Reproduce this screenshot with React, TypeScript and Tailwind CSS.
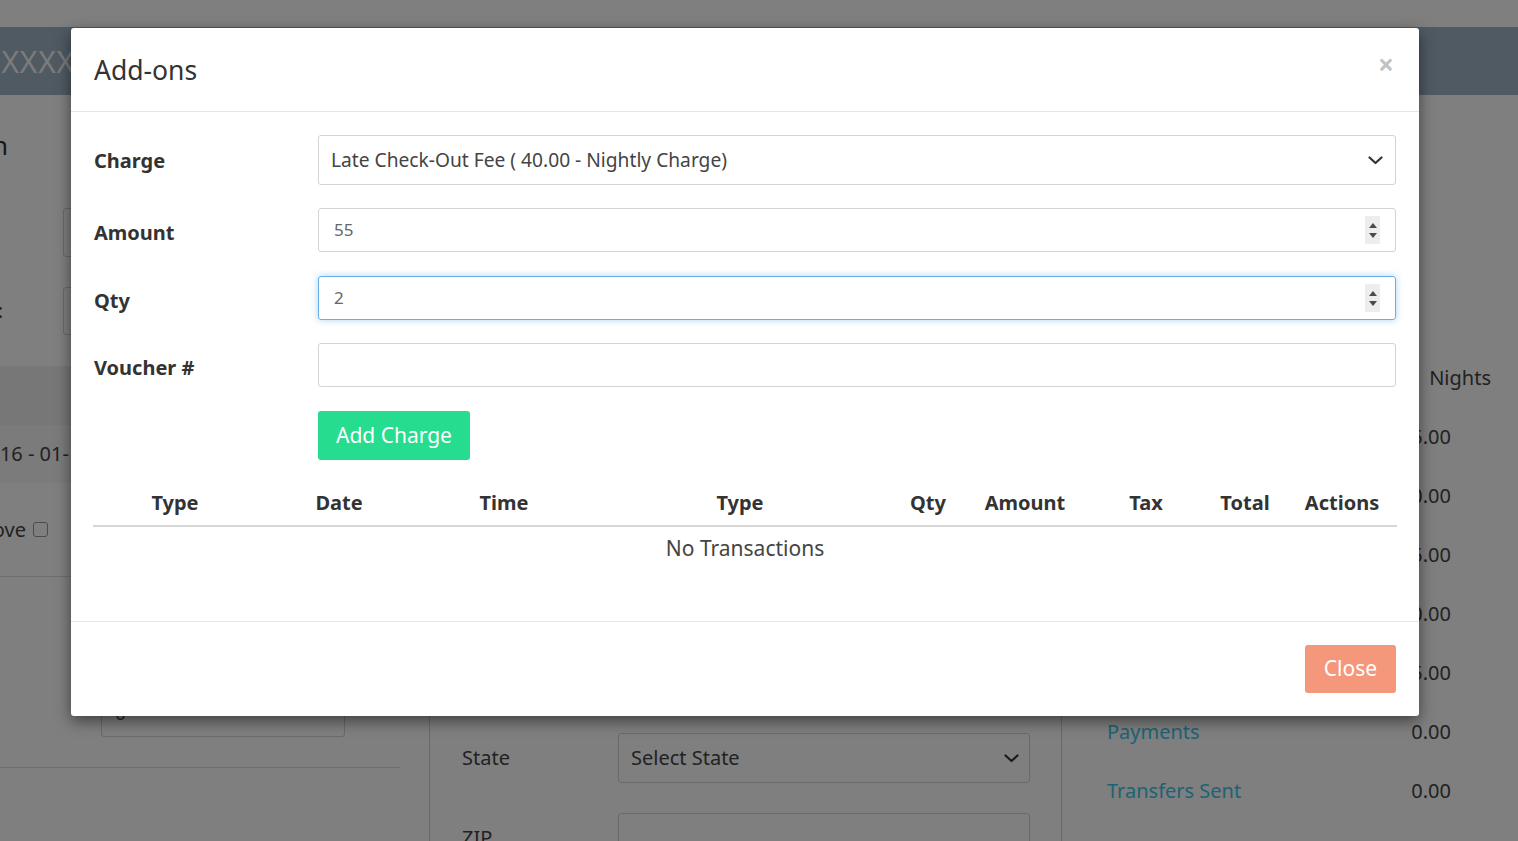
import React from 'react'

const columns = ['Type', 'Date', 'Time', 'Type', 'Qty', 'Amount', 'Tax', 'Total', 'Actions']

const middleRows = ['First Name', 'Last Name', 'Email', 'Phone', 'Address', 'Address 2', 'City', 'State', 'ZIP']

const summaryRows = [
  { label: 'Room Charges', value: '135.00' },
  { label: 'Taxes', value: '10.00' },
  { label: 'Subtotal', value: '145.00' },
  { label: 'Discounts', value: '0.00' },
  { label: 'Total', value: '145.00' },
  { label: 'Payments', value: '0.00' },
  { label: 'Transfers Sent', value: '0.00' },
]

function Chevron() {
  return (
    <svg width="15" height="9" viewBox="0 0 15 9" fill="none">
      <polyline points="1.5,1.5 7.5,7 13.5,1.5" stroke="#333" strokeWidth="2.2" strokeLinecap="round" strokeLinejoin="round" />
    </svg>
  )
}

function Spinner() {
  return (
    <div className="flex h-[28px] w-[15px] flex-col items-center justify-center gap-[5px] bg-[#ededed]">
      <svg width="8" height="5" viewBox="0 0 8 5">
        <polygon points="0,5 8,5 4,0" fill="#4a4a4a" />
      </svg>
      <svg width="8" height="5" viewBox="0 0 8 5">
        <polygon points="0,0 8,0 4,5" fill="#4a4a4a" />
      </svg>
    </div>
  )
}

function BackgroundPage() {
  return (
    <div className="flex h-full flex-col">
      <div className="h-[27px] shrink-0" />
      <div className="flex h-[68px] shrink-0 items-center bg-[#9eb4c6]">
        <span className="-ml-[6px] text-[30px] tracking-wide text-[#f4f6f8]">'XXXXXXXXXXXX</span>
      </div>
      <div className="flex flex-1">
        {/* left column, runs off the left edge */}
        <div className="-ml-[200px] w-[600px] shrink-0">
          <div className="flex pt-[32px]">
            <div className="w-[208px] text-right text-[26px] leading-[36px] text-[#333]">Reservation</div>
          </div>
          <div className="mt-[45px] flex items-center">
            <div className="w-[203px]" />
            <div className="ml-[60px] h-[49px] w-[280px] rounded-[3px] border border-[#d4d4d4] bg-white" />
          </div>
          <div className="mt-[30px] flex items-center">
            <div className="w-[203px] text-right text-[20px] text-[#444]">Departure:</div>
            <div className="ml-[60px] h-[48px] w-[280px] rounded-[3px] border border-[#d4d4d4] bg-white" />
          </div>
          <div className="mt-[31px] h-[59px] bg-[#eeeeee]" />
          <div className="flex h-[58px] items-center bg-[#f7f7f7] pl-[177px] text-[20px] text-[#444]">
            2016 - 01- 12
          </div>
          <div className="flex h-[94px] items-center border-b border-[#dcdcdc]">
            <div className="w-[226px] text-right text-[20px] text-[#444]">Remove</div>
            <div className="ml-[7px] h-[15px] w-[15px] rounded-[3px] border border-[#999] bg-white" />
          </div>
          <div className="border-b border-[#dcdcdc] pt-[112px] pb-[30px]">
            <div className="ml-[301px] flex h-[48px] w-[244px] items-center rounded-[3px] border border-[#d4d4d4] bg-white pl-[13px] text-[19px] text-[#555]">
              0
            </div>
          </div>
        </div>

        {/* middle column */}
        <div className="ml-[29px] w-[632px] shrink-0 border-l border-[#d4d4d4] pt-[78px] pl-[32px]">
          {middleRows.map((label) => (
            <div key={label} className="mb-[30px] flex h-[50px] items-center">
              <div className="w-[156px] text-[20px] text-[#444]">{label}</div>
              {label === 'State' ? (
                <div className="flex h-[50px] w-[412px] items-center justify-between rounded-[3px] border border-[#d4d4d4] bg-white pr-[10px] pl-[12px] text-[20px] text-[#444]">
                  Select State
                  <Chevron />
                </div>
              ) : (
                <div className="h-[50px] w-[412px] rounded-[3px] border border-[#d4d4d4] bg-white" />
              )}
            </div>
          ))}
        </div>

        {/* right column */}
        <div className="flex-1 border-l border-[#d4d4d4] pt-[253px] pl-[45px]">
          <div className="flex h-[59px] items-center justify-end pr-[27px] text-[20px] text-[#444]">Nights</div>
          {summaryRows.map((row) => (
            <div key={row.label} className="flex h-[59px] items-center justify-between pr-[67px] text-[20px]">
              <span className={row.label === 'Payments' || row.label === 'Transfers Sent' ? 'text-[#3bc6ea]' : 'text-[#444]'}>
                {row.label}
              </span>
              <span className="text-[#444]">{row.value}</span>
            </div>
          ))}
        </div>
      </div>
    </div>
  )
}

function AddOnsModal() {
  return (
    <div className="absolute top-[28px] left-[71px] w-[1348px] rounded-[3px] bg-white shadow-[0_5px_15px_rgba(0,0,0,0.5)]">
      <div className="flex h-[84px] items-center justify-between border-b border-[#e5e5e5] px-[23px]">
        <h4 className="pt-[2px] text-[26.5px] text-[#333]">Add-ons</h4>
        <button className="-mt-[12px] mr-[2px] text-[28px] leading-none font-bold text-[#c2c2c2]">×</button>
      </div>

      <div className="px-[23px] pt-[23px] pb-[50px]">
        <div className="flex items-center">
          <label className="w-[224px] pt-[1px] text-[20px] font-bold text-[#333]">Charge</label>
          <div className="flex h-[50px] flex-1 items-center justify-between rounded-[3px] border border-[#d4d4d4] pr-[12px] pl-[12px] text-[19.2px] text-[#444]">
            Late Check-Out Fee ( 40.00 - Nightly Charge)
            <Chevron />
          </div>
        </div>

        <div className="mt-[23px] flex items-center">
          <label className="w-[224px] pt-[6px] text-[20px] font-bold text-[#333]">Amount</label>
          <div className="flex h-[44px] flex-1 items-center justify-between rounded-[3px] border border-[#d4d4d4] pr-[15px] pl-[15px] text-[17px] text-[#666]">
            55
            <Spinner />
          </div>
        </div>

        <div className="mt-[24px] flex items-center">
          <label className="w-[224px] pt-[6px] text-[20px] font-bold text-[#333]">Qty</label>
          <div className="flex h-[44px] flex-1 items-center justify-between rounded-[3px] border border-[#66afe9] pr-[15px] pl-[15px] text-[17px] text-[#666] shadow-[0_0_7px_rgba(102,175,233,0.55)]">
            2
            <Spinner />
          </div>
        </div>

        <div className="mt-[23px] flex items-center">
          <label className="w-[224px] pt-[6px] text-[20px] font-bold text-[#333]">Voucher #</label>
          <div className="h-[44px] flex-1 rounded-[3px] border border-[#d4d4d4]" />
        </div>

        <div className="mt-[24px] flex">
          <div className="w-[224px]" />
          <button className="h-[49px] rounded-[3px] bg-[#26dc8f] px-[18px] text-[21px] text-white">Add Charge</button>
        </div>

        <div className="mt-[21px] -mx-px">
          <div className="grid h-[46px] grid-cols-[164px_164px_166px_306px_70px_124px_118px_80px_114px] items-center border-b-2 border-[#d6d6d6]">
            {columns.map((c, i) => (
              <div key={i} className="text-center text-[20px] font-bold text-[#333]">
                {c}
              </div>
            ))}
          </div>
          <div className="flex h-[44px] items-center justify-center text-[21px] text-[#444]">No Transactions</div>
        </div>
      </div>

      <div className="flex justify-end border-t border-[#e5e5e5] px-[23px] pt-[23px] pb-[23px]">
        <button className="h-[48px] w-[91px] rounded-[3px] bg-[#f5977b] text-[21px] text-white">Close</button>
      </div>
    </div>
  )
}

export default function App() {
  return (
    <div className="relative h-[841px] w-full overflow-hidden bg-white font-['Noto_Sans','Open_Sans',sans-serif]">
      <BackgroundPage />
      <div className="absolute inset-0 bg-black/50" />
      <AddOnsModal />
    </div>
  )
}
